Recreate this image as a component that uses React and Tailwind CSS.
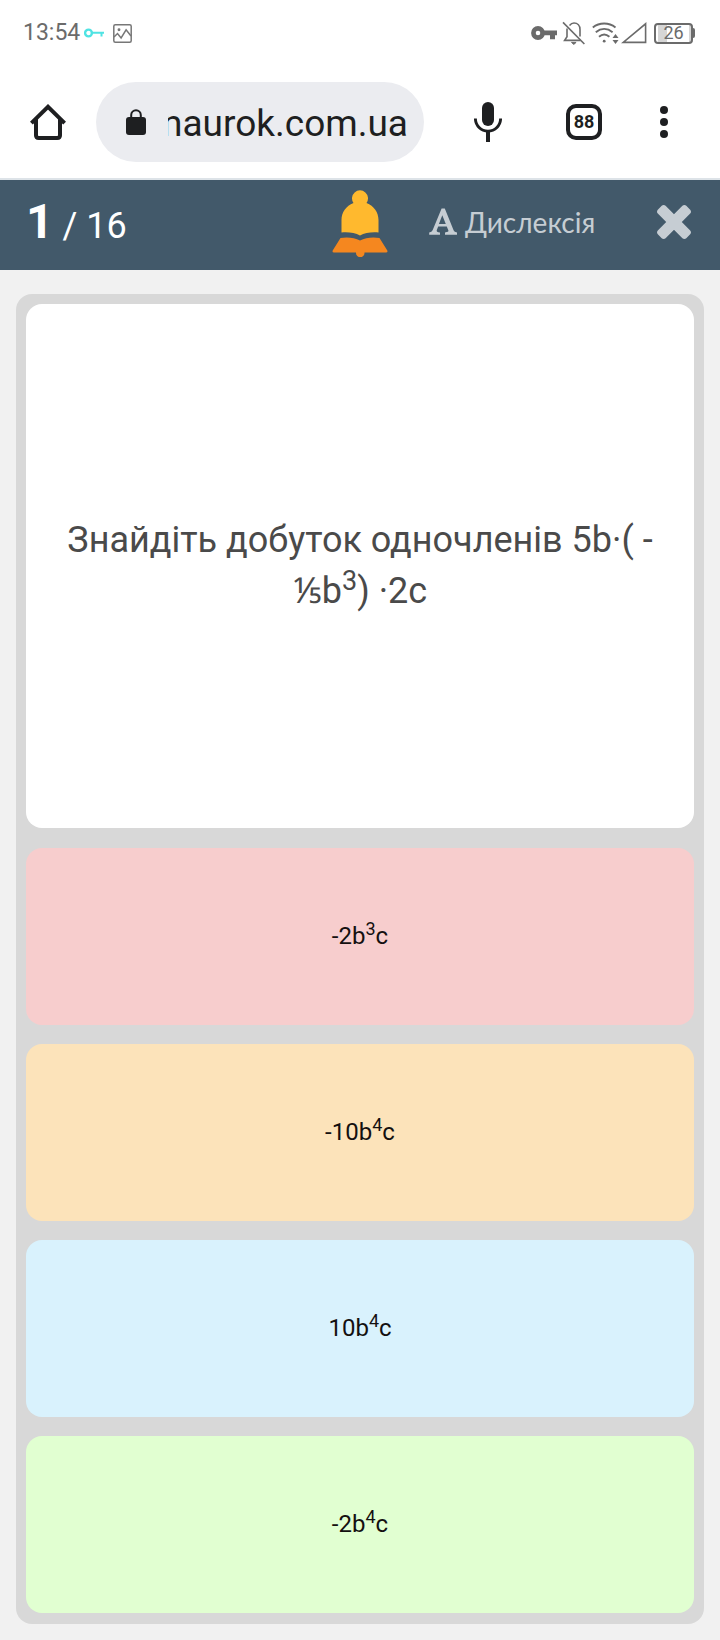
import React from 'react';

const answers = [
  { id: 1, prefix: '-2b', power: '3', suffix: 'c', color: 'bg-[#f7cdcd]' },
  { id: 2, prefix: '-10b', power: '4', suffix: 'c', color: 'bg-[#fce3ba]' },
  { id: 3, prefix: '10b', power: '4', suffix: 'c', color: 'bg-[#d9f2fd]' },
  { id: 4, prefix: '-2b', power: '4', suffix: 'c', color: 'bg-[#e1ffd1]' },
];

const StatusBar = () => (
  <div className="flex h-[66px] items-center justify-between pl-[23px] pr-[25px] text-[#6b6b6b]">
    <div className="flex items-center">
      <span className="text-[23px] leading-8">13:54</span>
      <svg className="ml-1 h-3 w-5" viewBox="0 0 20 12" fill="none" stroke="#4fe3e3">
        <circle cx="4.5" cy="6" r="3.4" strokeWidth="2.4" />
        <path d="M8 5.8h12M17.5 5.8v3.8" strokeWidth="2" />
      </svg>
      <svg className="ml-[9px] h-[19px] w-[19px]" viewBox="0 0 19 19" fill="none" stroke="#777" strokeWidth="1.5">
        <rect x="0.8" y="0.8" width="17.4" height="17.4" rx="1.5" />
        <path d="M1 13l3.5-3.5 3.6 4.5 5-8.2L18 12" />
        <circle cx="6" cy="5.8" r="0.7" fill="#777" />
      </svg>
    </div>

    <div className="flex items-center">
      <svg className="h-[14px] w-[26px]" viewBox="0 0 26 14">
        <circle cx="7" cy="7" r="4.6" fill="none" stroke="#6b6b6b" strokeWidth="4.6" />
        <path d="M12 4.6h14v4.6h-2v4h-5v-4h-7z" fill="#6b6b6b" />
      </svg>
      <svg className="ml-[5px] h-6 w-6" viewBox="0 0 24 24" fill="none" stroke="#6b6b6b" strokeWidth="1.6">
        <path d="M7.5 4.4C8.8 2.8 10.2 2 12 2c3.6 0 6 2.8 6 6.4v7M5 7.6v8.2L2.6 19.4H18.5" />
        <path d="M1 1.4L22.4 23" />
        <path d="M9.5 21.4h4.6L11.8 23.4z" fill="#6b6b6b" strokeWidth="1" />
      </svg>
      <svg className="ml-[6px] h-[22px] w-[27px]" viewBox="0 0 27 22" fill="none" stroke="#6b6b6b" strokeWidth="1.9">
        <path d="M0.8 5.4C7.5 0.2 16.8 0.2 23.5 5.4" />
        <path d="M3.8 10.2C9 6 15.4 6 20.6 10.2" />
        <path d="M7 14.8c3.2-2.8 7.2-2.8 10.4 0" />
        <circle cx="12.2" cy="19.2" r="1.4" fill="#6b6b6b" stroke="none" />
        <path d="M23.5 12l3 4h-6zM23.5 22l3-4h-6z" fill="#6b6b6b" stroke="none" />
      </svg>
      <svg className="ml-[2px] h-[22px] w-[26px]" viewBox="0 0 26 22" fill="none" stroke="#6b6b6b" strokeWidth="1.6">
        <path d="M24.6 1.8v18.6H2.2z" />
      </svg>
      <div className="ml-[7px] flex items-center">
        <div className="flex h-[21px] w-[39px] items-center justify-center rounded-[4px] border-2 border-[#6b6b6b] bg-linear-to-r from-[#d6d6d6] from-30% to-white to-30% bg-origin-content p-[2px] text-lg leading-4">
          26
        </div>
        <div className="h-[10px] w-[2px] rounded-r-sm bg-[#6b6b6b]" />
      </div>
    </div>
  </div>
);

const BrowserBar = () => (
  <div className="flex h-[114px] items-center border-b-2 border-[#dde3e8] pb-px pl-[30px] pr-[52px] text-[#1e1f21]">
    <button type="button" aria-label="Home">
      <svg className="h-9 w-9" viewBox="0 0 36 36" fill="none" stroke="currentColor" strokeWidth="4">
        <path d="M1.4 19.2L18 2.8l16.6 16.4" />
        <path d="M6 15v16.2Q6 34 8.8 34h18.4Q30 34 30 31.2V15" />
      </svg>
    </button>

    <button type="button" className="ml-[30px] flex h-20 min-w-0 flex-1 items-center rounded-full bg-[#ebecf0] pl-[30px] pr-4">
      <svg className="h-[26px] w-5 shrink-0" viewBox="0 0 20 26">
        <path d="M5.2 9V6a4.8 4.8 0 0 1 9.6 0v3" fill="none" stroke="currentColor" strokeWidth="2" />
        <rect x="0" y="8" width="20" height="18" rx="3" fill="currentColor" />
      </svg>
      <span className="ml-[22px] flex min-w-0 flex-1 justify-end overflow-hidden pt-1 text-[37px] leading-[48px]">
        naurok.com.ua
      </span>
    </button>

    <button type="button" aria-label="Voice search" className="ml-[50px]">
      <svg className="h-10 w-7" viewBox="0 0 28 40" fill="none" stroke="currentColor">
        <rect x="8" y="0" width="12" height="24" rx="6" fill="currentColor" stroke="none" />
        <path d="M1.4 16.5a12.6 12.6 0 0 0 25.2 0" strokeWidth="2.9" />
        <path d="M14 29v11" strokeWidth="4" />
      </svg>
    </button>
    <button type="button" aria-label="Tabs" className="ml-16 flex h-9 w-9 items-center justify-center rounded-[10px] border-4 border-current text-lg font-bold leading-none">
      88
    </button>
    <button type="button" aria-label="Menu" className="ml-[58px]">
      <svg className="h-8 w-2" viewBox="0 0 8 32" fill="currentColor">
        <circle cx="4" cy="4" r="4" />
        <circle cx="4" cy="16" r="4" />
        <circle cx="4" cy="28" r="4" />
      </svg>
    </button>
  </div>
);

const QuizHeader = () => (
  <header className="grid h-[90px] grid-cols-[1fr_auto_1fr] items-center bg-[#42596a] text-[#c6cdd3]">
    <div className="pl-[26px] pb-[2px] text-4xl leading-[48px] text-white">
      <span className="text-5xl leading-[48px] font-bold">1</span> / 16
    </div>

    <svg className="mb-1 h-[68px] w-14" viewBox="0 0 56 68">
      <path d="M21.5 14a8 8 0 1 1 13 0C42 17 46.5 23.5 46.5 31V43.5C40 43 33 43.5 28 46.500C23 43.5 16 43 9.5 43.5V31C9.5 23.5 14 17 21.5 14z" fill="#ffb92e" />
      <path d="M8.5 49Q20 47.5 28 51.5Q36 47.5 47.5 49L55.3 61.5Q56 63.5 54 63.5H32.5V64A4.2 4.2 0 0 1 24 64V63.5H2Q0 63.5 0.7 61.5z" fill="#f5871f" />
    </svg>

    <div className="flex items-center justify-between pl-[41px] pr-[29px] pb-[6px]">
      <button type="button" className="flex items-center gap-2">
        <svg className="h-7 w-7" viewBox="0 0 28 28" fill="currentColor">
          <path fillRule="evenodd" d="M12.6 0.5H15.8L24.7 22.6Q25.2 24.2 28 24.4V26.8H16V24.4Q20 24.2 19.4 22.6L17.800 18.6H9.2L7.8 22Q7 24.200 11 24.4V26.8H0.2V24.4Q2.8 24.2 3.6 22.2zM13.3 7.2L9.9 16H16.8z" />
        </svg>
        <span className="font-[Lato,sans-serif] text-[28px] leading-9">Дислексія</span>
      </button>
      <button type="button" aria-label="Закрити">
        <svg className="h-[34px] w-[34px]" viewBox="302 366 1188 1188" fill="currentColor">
          <path d="M1490 1322q0 40-28 68l-136 136q-28 28-68 28t-68-28l-294-294-294 294q-28 28-68 28t-68-28l-136-136q-28-28-28-68t28-68l294-294-294-294q-28-28-28-68t28-68l136-136q28-28 68-28t68 28l294 294 294-294q28-28 68-28t68 28l136 136q28 28 28 68t-28 68l-294 294 294 294q28 28 28 68z" />
        </svg>
      </button>
    </div>
  </header>
);

const App = () => {
  return (
    <div className="min-h-screen bg-[#f1f1f1] font-[Roboto,sans-serif]">
      <div className="bg-white">
        <StatusBar />
        <BrowserBar />
      </div>
      <QuizHeader />

      <main className="px-4 pt-6 pb-4">
        <div className="rounded-2xl bg-[#d8d8d8] px-[10px] pt-[10px] pb-[11px]">
          <div className="flex min-h-[524px] items-center justify-center rounded-2xl bg-white px-9 text-center">
            <p className="text-4xl leading-[51px] text-[#4a4a4a]">
              Знайдіть добуток одночленів 5b·( -⅕b<sup>3</sup>) ·2c
            </p>
          </div>

          <div className="mt-5 flex flex-col gap-[19px]">
            {answers.map(answer => (
              <button
                key={answer.id}
                type="button"
                className={`min-h-[177px] rounded-2xl pb-[2px] text-2xl leading-8 text-[#141010] ${answer.color}`}
              >
                {answer.prefix}
                <sup>{answer.power}</sup>
                {answer.suffix}
              </button>
            ))}
          </div>
        </div>
      </main>
    </div>
  );
};

export default App;
